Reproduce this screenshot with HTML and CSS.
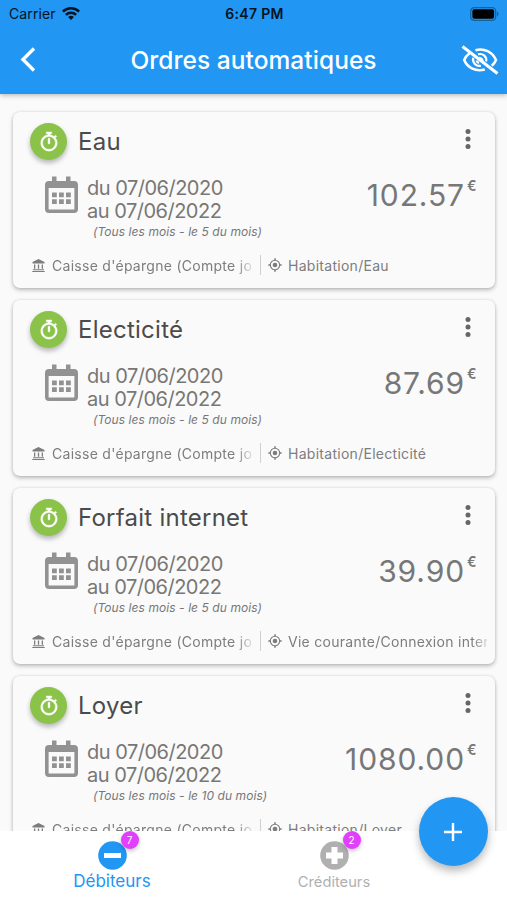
FILE: index.html
```html
<!DOCTYPE html>
<html lang="fr">
<head>
<meta charset="utf-8">
<title>Ordres automatiques</title>
<link rel="stylesheet" href="styles.css">
</head>
<body>
<svg class="defs" aria-hidden="true">
  <symbol id="timer" viewBox="0 0 24 24"><path fill="currentColor" stroke="currentColor" stroke-width=".4" d="M15 1H9v2h6V1zm-4 13h2V8h-2v6zm8.030-6.610 1.420-1.420c-.430-.510-.900-.990-1.410-1.410l-1.420 1.420A8.962 8.962 0 0 0 12 4a9 9 0 1 0 7.030 3.390zM12 20a7 7 0 1 1 0-14 7 7 0 0 1 0 14z"/><path fill="currentColor" d="M10.500 2.500h3v3h-3z"/></symbol>
  <symbol id="dots" viewBox="0 0 6 22"><g fill="currentColor"><circle cx="3" cy="3.500" r="2.500"/><circle cx="3" cy="11" r="2.500"/><circle cx="3" cy="18.500" r="2.500"/></g></symbol>
  <symbol id="calendar" viewBox="0 0 33 37"><path fill="none" stroke="currentColor" stroke-width="3.600" d="M4 6.800h25q2.200 0 2.200 2.200v24q0 2.200-2.200 2.200H4q-2.200 0-2.200-2.200V9q0-2.200 2.200-2.200z"/><path fill="currentColor" d="M2 6h29v6H2zM7 .500h4.500V7H7zM21 .500h4.500V7H21zM7 16.500h4.800v4.800H7zM14 16.500h4.800v4.800H14zM21 16.500h4.800v4.800H21zM7 23.200h4.800V28H7zM14 23.200h4.800V28H14zM21 23.200h4.800V28H21z"/></symbol>
  <symbol id="bank" viewBox="0 0 13 13"><path fill="currentColor" d="M6.500 0 12.500 3v1.500H.500V3zM2 5.500h1.300v4.200H2zM5.850 5.500h1.300v4.200h-1.300zM9.700 5.500H11v4.200H9.700zM1 10.300h11v.900H1zM.300 11.900h12.400V13H.300z"/></symbol>
  <symbol id="target" viewBox="0 0 14 14"><circle cx="7" cy="7" r="2.300" fill="currentColor"/><circle cx="7" cy="7" r="4.700" fill="none" stroke="currentColor" stroke-width="1.100"/><path stroke="currentColor" stroke-width="1.500" d="M7 .300v2M7 11.700v2M.300 7h2M11.700 7h2"/></symbol>
</svg>
<div class="screen">
  <header class="top">
    <div class="status">
      <div class="carrier"><span>Carrier</span>
        <svg width="18" height="13" viewBox="0 0 18 13"><g fill="none" stroke="#06131f" stroke-width="2.500"><path d="M.900 4.700a11.500 11.500 0 0 1 16.200 0"/><path d="M3.900 7.900a7.200 7.200 0 0 1 10.200 0"/></g><path fill="#06131f" d="M9 13 6.100 10.100a4.100 4.100 0 0 1 5.800 0z"/></svg>
      </div>
      <div class="clock">6:47 PM</div>
      <svg class="battery" width="30" height="14" viewBox="0 0 30 14"><rect x=".700" y=".700" width="25" height="12.600" rx="3.600" fill="none" stroke="#176298" stroke-width="1.300"/><rect x="2.400" y="2.300" width="21.700" height="9.400" rx="2" fill="#000"/><path fill="#176298" d="M27 4.500q3 2.500 0 5z"/></svg>
    </div>
    <div class="bar">
      <svg width="16" height="25" viewBox="0 0 16 25"><path fill="none" stroke="#fff" stroke-width="3.400" d="M14 1.500 3 12.500l11 11"/></svg>
      <h1>Ordres automatiques</h1>
      <svg width="38" height="30" viewBox="0 0 38 30"><g fill="none" stroke="#fff"><path stroke-width="2.600" d="M14.500 5.300C23 2.500 31.500 7 35 15c-.900 2.200-2.400 4.200-4.200 5.700M8.600 8.200C6 10 4.200 12.300 3.200 15c3.400 8 11.500 12 20.600 9.500"/><path stroke-width="2.200" d="M17 9.300c5-1.300 9.200 2.600 8.100 7.200M12.200 12.800c-1 4.800 2.800 9 7.700 7.900M18 12.800c2.200.200 3.500 1.500 3.800 3.600M15.500 15.500c.300 1.300 1.200 2.100 2.600 2.300"/><path stroke-width="3" d="M1.500 1.500 36.500 28.500"/></g></svg>
    </div>
  </header>

  <main class="list">
    <article class="card">
      <div class="head"><span class="badge"><svg><use href="#timer"/></svg></span><h2>Eau</h2><svg class="more"><use href="#dots"/></svg></div>
      <div class="body"><svg class="cal"><use href="#calendar"/></svg><div class="dates"><p>du 07/06/2020</p><p>au 07/06/2022</p><em>(Tous les mois - le 5 du mois)</em></div><div class="amount">102.57<sup>€</sup></div></div>
      <div class="foot"><svg class="bank"><use href="#bank"/></svg><span class="account">Caisse d'épargne (Compte jo</span><svg class="target"><use href="#target"/></svg><span class="category">Habitation/Eau</span></div>
    </article>
    <article class="card">
      <div class="head"><span class="badge"><svg><use href="#timer"/></svg></span><h2>Electicité</h2><svg class="more"><use href="#dots"/></svg></div>
      <div class="body"><svg class="cal"><use href="#calendar"/></svg><div class="dates"><p>du 07/06/2020</p><p>au 07/06/2022</p><em>(Tous les mois - le 5 du mois)</em></div><div class="amount">87.69<sup>€</sup></div></div>
      <div class="foot"><svg class="bank"><use href="#bank"/></svg><span class="account">Caisse d'épargne (Compte jo</span><svg class="target"><use href="#target"/></svg><span class="category">Habitation/Electicité</span></div>
    </article>
    <article class="card">
      <div class="head"><span class="badge"><svg><use href="#timer"/></svg></span><h2>Forfait internet</h2><svg class="more"><use href="#dots"/></svg></div>
      <div class="body"><svg class="cal"><use href="#calendar"/></svg><div class="dates"><p>du 07/06/2020</p><p>au 07/06/2022</p><em>(Tous les mois - le 5 du mois)</em></div><div class="amount">39.90<sup>€</sup></div></div>
      <div class="foot"><svg class="bank"><use href="#bank"/></svg><span class="account">Caisse d'épargne (Compte jo</span><svg class="target"><use href="#target"/></svg><span class="category fade">Vie courante/Connexion inter</span></div>
    </article>
    <article class="card">
      <div class="head"><span class="badge"><svg><use href="#timer"/></svg></span><h2>Loyer</h2><svg class="more"><use href="#dots"/></svg></div>
      <div class="body"><svg class="cal"><use href="#calendar"/></svg><div class="dates"><p>du 07/06/2020</p><p>au 07/06/2022</p><em>(Tous les mois - le 10 du mois)</em></div><div class="amount">1080.00<sup>€</sup></div></div>
      <div class="foot"><svg class="bank"><use href="#bank"/></svg><span class="account">Caisse d'épargne (Compte jo</span><svg class="target"><use href="#target"/></svg><span class="category">Habitation/Loyer</span></div>
    </article>
  </main>

  <nav class="tabs">
    <div class="tab active"><span class="icon"><svg width="29" height="29" viewBox="0 0 29 29"><circle cx="14.500" cy="14.500" r="14.300" fill="currentColor"/><path stroke="#fff" stroke-width="5" d="M6 14.500h17"/></svg><b class="count">7</b></span><span class="label">Débiteurs</span></div>
    <div class="tab"><span class="icon"><svg width="29" height="29" viewBox="0 0 29 29"><circle cx="14.500" cy="14.500" r="14.300" fill="currentColor"/><path stroke="#fff" stroke-width="6" d="M6 14.500h17M14.500 6v17"/></svg><b class="count">2</b></span><span class="label">Créditeurs</span></div>
  </nav>
  <button class="fab" aria-label="Ajouter"><svg width="18" height="18" viewBox="0 0 18 18"><path stroke="#fff" stroke-width="2.400" d="M0 9h18M9 0v18"/></svg></button>
</div>
</body>
</html>
```
FILE: styles.css
```css
* { box-sizing: border-box; margin: 0; padding: 0; }
body { font-family: Inter, "Liberation Sans", sans-serif; background: #fafafa; }
svg { display: block; flex: none; }
.defs { position: absolute; width: 0; height: 0; }
.screen { position: relative; width: 507px; height: 900px; overflow: hidden; display: flex; flex-direction: column; }

.top { flex: none; height: 94px; background: #2196f3; box-shadow: 0 1px 5px rgba(0,0,0,.3); z-index: 1; }
.status { height: 27px; display: grid; grid-template-columns: 1fr auto 1fr; align-items: center; padding: 0 7px 0 9px; color: #06131f; font-size: 14px; }
.carrier { display: flex; align-items: center; gap: 6px; letter-spacing: .1px; }
.clock { font-weight: 600; font-size: 14px; letter-spacing: .3px; }
.battery { justify-self: end; }
.bar { height: 65px; display: flex; align-items: center; justify-content: space-between; padding: 0 8px 0 20px; color: #fff; }
.bar h1 { font-size: 24.500px; font-weight: 500; letter-spacing: .05px; margin-left: 10px; }

.list { flex: 1; min-height: 0; overflow: hidden; padding: 18px 12px 0 13px; display: flex; flex-direction: column; gap: 12px; }
.card { flex: none; height: 176px; border-radius: 7px; background: #fafafa; box-shadow: 0 2px 4px rgba(0,0,0,.25), 0 0 3px rgba(0,0,0,.1); padding: 11px 8px 0 17px; }
.head { display: flex; height: 37px; }
.badge { width: 37px; height: 37px; border-radius: 50%; background: #8bc34a; color: #fff; display: grid; place-items: center; box-shadow: 0 3px 5px rgba(0,0,0,.28); }
.badge svg { width: 22px; height: 22px; }
.head h2 { flex: 1; margin-left: 11px; font-size: 24px; line-height: 38px; font-weight: 400; letter-spacing: .25px; color: #4b4b4b; }
.more { width: 6px; height: 22px; margin: 5px 16px 0 0; color: #666; }
.body { display: flex; height: 80px; padding: 16px 11px 0 15px; color: #777; }
.cal { width: 33px; height: 37px; color: #929292; }
.dates { margin-left: 9px; font-size: 20px; line-height: 23px; letter-spacing: -.5px; padding-top: 1px; }
.dates em { display: block; margin: 1px 0 0 6px; font-size: 12px; line-height: 16px; letter-spacing: .07px; }
.amount { margin-left: auto; font-size: 30px; line-height: 39px; font-weight: 400; letter-spacing: .9px; display: flex; }
.amount sup { width: 9px; margin-left: 2px; font-size: 14px; font-weight: 600; letter-spacing: 0; line-height: 19px; }
.foot { display: flex; align-items: center; height: 36px; padding-left: 2px; margin-top: 7px; font-size: 14px; letter-spacing: .28px; color: #7d7d7d; white-space: nowrap; }
.bank { width: 13px; height: 13px; }
.account { width: 201px; overflow: hidden; margin-left: 7px; -webkit-mask-image: linear-gradient(90deg, #000 184px, transparent 204px); mask-image: linear-gradient(90deg, #000 184px, transparent 204px); }
.target { width: 22px; height: 20px; border-left: 1.500px solid #d0d0d0; padding: 3px 0 3px 7px; margin-left: 6.500px; }
.category { margin-left: 6.500px; flex: 1; overflow: hidden; }
.fade { -webkit-mask-image: linear-gradient(90deg, #000 184px, transparent 204px); mask-image: linear-gradient(90deg, #000 184px, transparent 204px); }

.tabs { flex: none; height: 69px; padding-left: 1px; display: flex; background: #fff; z-index: 1; }
.tab { width: 222px; display: flex; flex-direction: column; align-items: center; color: #b0b0b0; padding-top: 10px; }
.icon { position: relative; }
.count { position: absolute; left: 23px; top: -10px; width: 18px; height: 18px; border-radius: 50%; background: #e040fb; color: #fff; font-size: 10px; font-weight: 400; line-height: 18px; text-align: center; box-shadow: 0 2px 4px rgba(0,0,0,.25); }
.label { font-size: 14.700px; line-height: 22px; margin-top: 1px; }
.active { color: #2196f3; }
.active .label { font-size: 17px; line-height: 20px; }
.fab { position: absolute; z-index: 2; left: 418.500px; top: 797px; width: 69px; height: 69px; border: 0; border-radius: 50%; background: #2196f3; display: grid; place-items: center; box-shadow: 0 5px 8px rgba(0,0,0,.28); }
```
